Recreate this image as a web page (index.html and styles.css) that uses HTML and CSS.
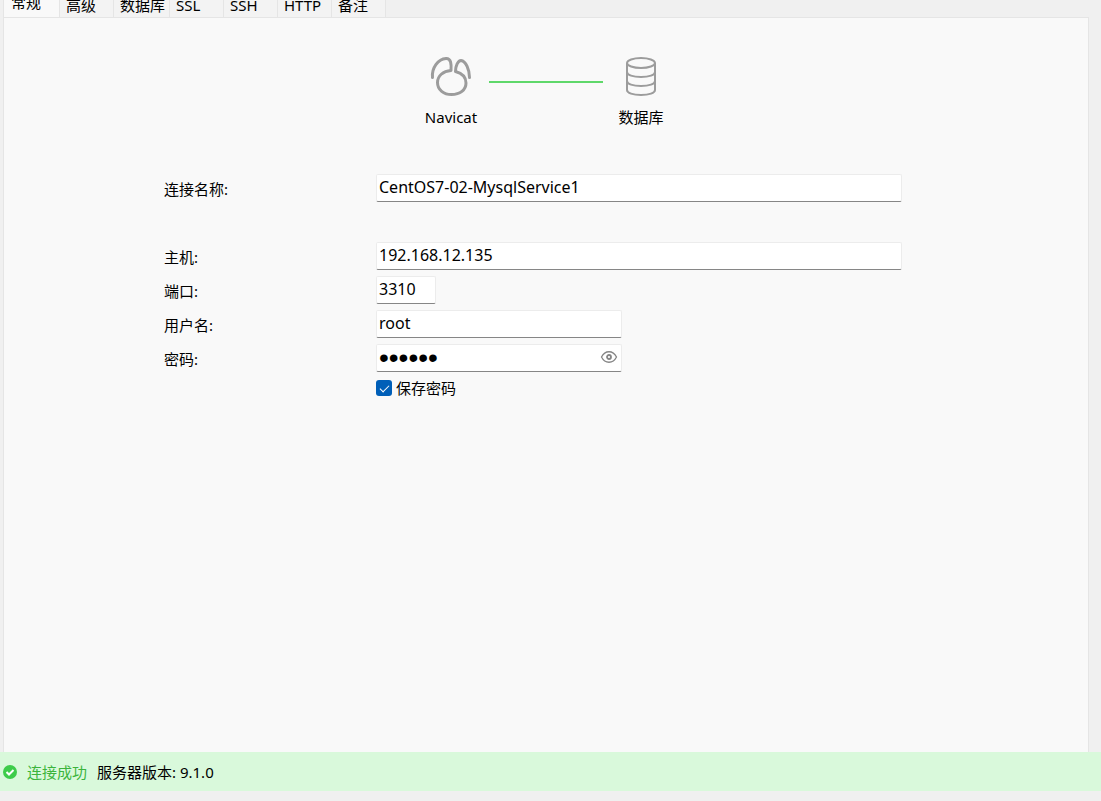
FILE: index.html
```html
<!DOCTYPE html>
<html lang="zh-CN">
<head>
<meta charset="utf-8">
<title>Navicat</title>
<link rel="stylesheet" href="styles.css">
</head>
<body>
<div class="window">
  <nav class="tabs" role="tablist">
    <button class="tab tab-active" role="tab" aria-selected="true">常规</button>
    <button class="tab" role="tab">高级</button>
    <button class="tab tab-wide" role="tab">数据库</button>
    <button class="tab" role="tab">SSL</button>
    <button class="tab" role="tab">SSH</button>
    <button class="tab" role="tab">HTTP</button>
    <button class="tab" role="tab">备注</button>
  </nav>
  <main class="panel">
    <div class="diagram">
      <div class="endpoint">
        <svg class="endpoint-icon" viewBox="0 0 42 42" aria-hidden="true">
          <g fill="none" stroke="#9c9c9c" stroke-width="3" stroke-linecap="round" stroke-linejoin="round">
            <path d="M2.500 21.500C1.500 12 8 3 16 2.500C21 2.200 21.500 8 21 14.500C13 15 7.500 20 7.500 26.500C7.500 34 14 38.500 21.500 38.500C30 38.500 36 34 36 27C36 20 31 17 25.500 15.500C25.500 10 28 4.500 31 4.500C36 5 39.500 14 39.500 21.500"/>
          </g>
        </svg>
        <span>Navicat</span>
      </div>
      <div class="link-line"></div>
      <div class="endpoint">
        <svg class="endpoint-icon" viewBox="0 0 42 42" aria-hidden="true">
          <g fill="none" stroke="#9c9c9c" stroke-width="2">
            <ellipse cx="21" cy="7" rx="14" ry="5"/>
            <path d="M7 7V34C7 37 13 39 21 39S35 37 35 34V7M7 16C7 19 13 21 21 21S35 19 35 16M7 25C7 28 13 30 21 30S35 28 35 25"/>
          </g>
        </svg>
        <span>数据库</span>
      </div>
    </div>
    <form class="form">
      <label class="label" for="name">连接名称:</label>
      <input class="field" id="name" type="text" value="CentOS7-02-MysqlService1">
      <div class="spacer"></div>
      <label class="label" for="host">主机:</label>
      <input class="field" id="host" type="text" value="192.168.12.135">
      <label class="label" for="port">端口:</label>
      <input class="field field-port" id="port" type="text" value="3310">
      <label class="label" for="user">用户名:</label>
      <input class="field field-medium" id="user" type="text" value="root">
      <label class="label" for="password">密码:</label>
      <div class="password field-medium">
        <input class="field field-secret" id="password" type="password" value="123456">
        <button class="reveal" type="button" aria-label="显示密码">
          <svg class="reveal-icon" viewBox="0 0 18 14" aria-hidden="true">
            <path d="M1.500 7C5 0 13 0 16.500 7C13 14 5 14 1.500 7Z" fill="none" stroke="#858585" stroke-width="1.300"/>
            <circle cx="9" cy="7" r="2" fill="none" stroke="#858585" stroke-width="1.800"/>
          </svg>
        </button>
      </div>
      <div class="save">
        <input class="check" id="save" type="checkbox" checked>
        <label for="save">保存密码</label>
      </div>
    </form>
  </main>
  <footer class="status">
    <svg class="status-icon" viewBox="0 0 14 14" aria-hidden="true">
      <circle cx="7" cy="7" r="7" fill="#3dcc4a"/>
      <path d="M3.500 7L6 9.500L10.500 5" fill="none" stroke="#fff" stroke-width="2"/>
    </svg>
    <span class="status-ok">连接成功</span>
    <span>服务器版本: 9.1.0</span>
  </footer>
</div>
</body>
</html>
```
FILE: styles.css
```css
* {
  box-sizing: border-box;
}

body {
  margin: 0;
  background: #f0f0f0;
  color: #000;
  font: 15px/20px "Noto Sans", "Noto Sans CJK SC", sans-serif;
}

input,
button {
  margin: 0;
  color: inherit;
  font: inherit;
}

.window {
  display: flex;
  flex-direction: column;
  height: 100vh;
  padding-bottom: 10px;
}

.tabs {
  display: flex;
  align-items: flex-end;
  flex: none;
  height: 18px;
  margin: 0 12px 0 3px;
  overflow: hidden;
  border-bottom: 1px solid #e5e5e5;
}

.tab {
  flex: none;
  width: 54px;
  height: 30px;
  padding: 8px 0 2px 6px;
  border: 0;
  border-right: 1px solid #e5e5e5;
  background: #f3f3f3;
  text-align: left;
}

.tab-active {
  width: 57px;
  height: 34px;
  margin-bottom: -1px;
  padding: 8px 0 6px 7px;
  border-left: 1px solid #e5e5e5;
  background: #f9f9f9;
}

.tab-wide {
  width: 56px;
}

.panel {
  flex: 1;
  min-height: 0;
  margin: 0 12px 0 3px;
  border: 1px solid #e5e5e5;
  border-width: 0 1px;
  background: #f9f9f9;
}

.diagram {
  display: flex;
  justify-content: center;
  gap: 8px;
  padding-top: 38px;
}

.endpoint {
  display: flex;
  flex-direction: column;
  align-items: center;
  gap: 9px;
  width: 60px;
}

.endpoint-icon {
  width: 42px;
  height: 42px;
}

.link-line {
  width: 114px;
  height: 2px;
  margin-top: 25px;
  background: #5fd86a;
}

.form {
  display: grid;
  grid-template-columns: 212px 1fr;
  row-gap: 6px;
  padding: 47px 186px 0 160px;
}

.label {
  padding-top: 5px;
}

.field {
  width: 100%;
  height: 28px;
  padding: 0 2px 2px;
  border: 1px solid #ececec;
  border-bottom-color: #868686;
  border-radius: 2px;
  outline: 0;
  background: #fff;
  font-size: 16px;
}

.field-port {
  width: 60px;
}

.field-medium {
  width: 246px;
}

.field-secret {
  padding: 0 28px 0 2px;
  font: 28px/26px "Liberation Sans", sans-serif;
}

.spacer {
  grid-column: 1 / -1;
  height: 28px;
}

.password {
  position: relative;
}

.reveal {
  position: absolute;
  top: 6px;
  right: 4px;
  width: 18px;
  height: 14px;
  padding: 0;
  border: 0;
  background: none;
}

.reveal-icon {
  display: block;
}

.save {
  display: flex;
  grid-column: 2;
  align-items: center;
  gap: 4px;
}

.check {
  width: 16px;
  height: 16px;
  border-radius: 3px;
  appearance: none;
  background: #005fb8;
}

.check:checked::before {
  content: "";
  display: block;
  width: 8px;
  height: 4px;
  margin: 5px 4px;
  border: solid #fff;
  border-width: 0 0 1px 1px;
  transform: rotate(-45deg);
}

.status {
  display: flex;
  flex: none;
  align-items: center;
  gap: 10px;
  height: 39px;
  padding: 0 3px;
  background: #d9f9db;
}

.status-icon {
  width: 14px;
  height: 14px;
}

.status-ok {
  color: #3cb43c;
}
```
